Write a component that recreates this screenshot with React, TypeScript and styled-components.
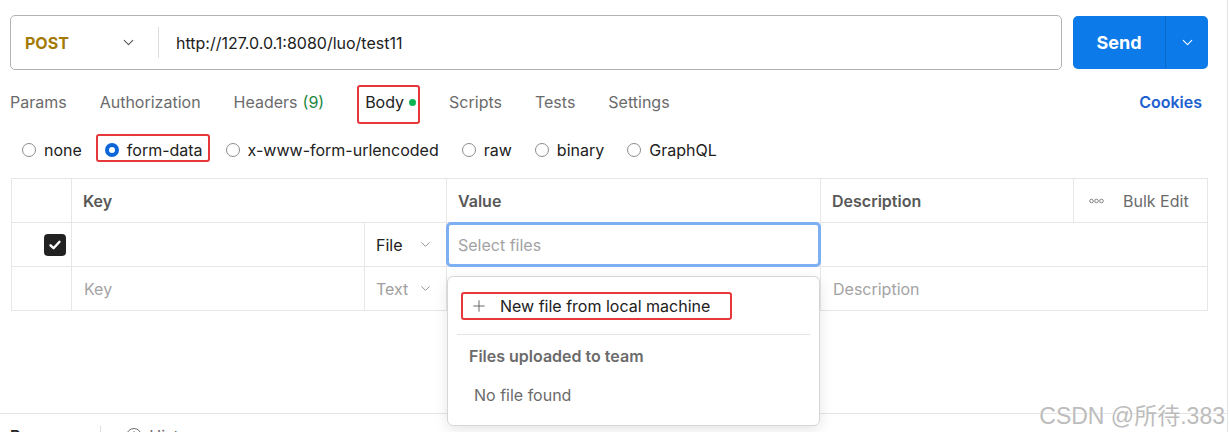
import React from 'react'
import styled, { createGlobalStyle } from 'styled-components'
import { ChevronDown, Plus, Clock } from 'lucide-react'

const GlobalStyle = createGlobalStyle`
    html, body {
        margin: 0;
        padding: 0;
        background: #fff;
    }
    body {
        font-family: Inter, "Noto Sans", "Noto Sans CJK SC", sans-serif;
        color: #212121;
        -webkit-font-smoothing: antialiased;
    }
`

const Page = styled.div`
    position: relative;
    box-sizing: border-box;
    width: 1228px;
    height: 432px;
    overflow: hidden;
    border-right: 1px solid #e4e4e4;
    display: flex;
    flex-direction: column;
    & > * {
        flex-shrink: 0;
    }
`

const RequestBar = styled.div`
    display: flex;
    align-items: center;
    gap: 11px;
    margin-top: 15px;
    padding: 0 19px 0 10px;
`

const UrlBox = styled.div`
    flex: 1;
    height: 55px;
    box-sizing: border-box;
    border: 1px solid #b3b3b3;
    border-radius: 5px;
    display: flex;
    align-items: center;
`

const MethodSelect = styled.div`
    width: 148px;
    height: 31px;
    box-sizing: border-box;
    border-right: 1px solid #dedede;
    display: flex;
    align-items: center;
    justify-content: space-between;
    padding: 0 21px 0 14px;
    color: #a47a06;
    font-weight: 700;
    font-size: 16px;
    svg {
        color: #555;
    }
`

const UrlText = styled.span`
    padding-left: 17px;
    font-size: 16px;
    color: #212121;
`

const SendGroup = styled.div`
    display: flex;
    width: 135px;
    height: 53px;
    border-radius: 5px;
    background: #0c7ae8;
    color: #fff;
    overflow: hidden;
`

const SendLabel = styled.div`
    width: 92px;
    display: flex;
    align-items: center;
    justify-content: center;
    font-weight: 700;
    font-size: 18px;
    border-right: 1px solid #0a6bcc;
`

const SendChevron = styled.div`
    flex: 1;
    display: flex;
    align-items: center;
    justify-content: center;
`

const TabsRow = styled.div`
    display: flex;
    align-items: center;
    height: 38px;
    margin-top: 13px;
    padding: 0 25px 0 10px;
`

const TabList = styled.div`
    display: flex;
    align-items: center;
    gap: 33px;
    flex: 1;
`

const Tab = styled.span<{ $active?: boolean }>`
    position: relative;
    display: inline-flex;
    align-items: center;
    height: 20px;
    font-size: 16px;
    color: ${(p) => (p.$active ? '#212121' : '#6b6b6b')};
`

const Count = styled.span`
    margin-left: 5px;
    color: #23873f;
`

const Dot = styled.span`
    width: 7px;
    height: 7px;
    border-radius: 50%;
    background: #0cb554;
    margin-left: 5px;
`

const Marked = styled.span<{ $t: number; $r: number; $b: number; $l: number }>`
    position: relative;
    display: inline-flex;
    align-items: center;
    &::after {
        content: '';
        position: absolute;
        top: ${(p) => p.$t}px;
        right: ${(p) => p.$r}px;
        bottom: ${(p) => p.$b}px;
        left: ${(p) => p.$l}px;
        border: 2px solid #e5373c;
        border-radius: 3px;
        pointer-events: none;
    }
`

const CookiesLink = styled.span`
    color: #1c61cf;
    font-weight: 600;
    font-size: 16px;
`

const RadioRow = styled.div`
    display: flex;
    align-items: center;
    gap: 23px;
    height: 32px;
    margin-top: 13px;
    padding-left: 22px;
`

const RadioItem = styled.label`
    display: inline-flex;
    align-items: center;
    gap: 8px;
    height: 20px;
    font-size: 16px;
    color: #212121;
`

const RadioCircle = styled.span<{ $checked?: boolean }>`
    box-sizing: border-box;
    width: 14px;
    height: 14px;
    border-radius: 50%;
    border: ${(p) => (p.$checked ? '4px solid #0c66d8' : '1px solid #8c8c8c')};
    background: #fff;
`

const Table = styled.div`
    display: grid;
    grid-template-columns: 59px 292px 81px 373px 252px 133px;
    grid-auto-rows: 43px;
    gap: 1px;
    padding: 1px;
    background: #e6e6e6;
    margin: 12px 0 0 11px;
    width: max-content;
`

const Cell = styled.div<{ $span?: number }>`
    background: #fff;
    display: flex;
    align-items: center;
    padding: 0 11px;
    font-size: 16px;
    grid-column: span ${(p) => p.$span || 1};
    min-width: 0;
`

const HeadCell = styled(Cell)`
    font-weight: 600;
    color: #585858;
`

const CheckCell = styled(Cell)`
    justify-content: flex-end;
    padding: 0 5px 0 0;
`

const CheckBox = styled.span`
    width: 22px;
    height: 22px;
    border-radius: 4px;
    background: #212121;
    display: flex;
    align-items: center;
    justify-content: center;
`

const BulkCell = styled(Cell)`
    padding-left: 15px;
    gap: 19px;
    color: #6b6b6b;
    font-weight: 400;
`

const TypeCell = styled(Cell)<{ $muted?: boolean }>`
    justify-content: space-between;
    padding: 0 13px 0 11px;
    color: ${(p) => (p.$muted ? '#a0a0a0' : '#212121')};
    svg {
        color: #8c8c8c;
    }
`

const Placeholder = styled.span`
    color: #a3a3a3;
`

const ValueCell = styled(Cell)`
    padding: 0;
    position: relative;
    overflow: visible;
    z-index: 1;
`

const FileInput = styled.div`
    box-sizing: border-box;
    margin: -1px;
    width: calc(100% + 2px);
    height: calc(100% + 2px);
    border: 3px solid #7cb0f2;
    border-radius: 5px;
    display: flex;
    align-items: center;
    padding-left: 9px;
    color: #a3a3a3;
    font-size: 16px;
`

const Menu = styled.div`
    position: absolute;
    top: 276px;
    left: 447px;
    width: 373px;
    height: 150px;
    box-sizing: border-box;
    background: #fff;
    border: 1px solid #d6d6d6;
    border-radius: 6px;
    box-shadow: 0 4px 14px rgba(0, 0, 0, 0.1);
    padding: 15px 9px 0 9px;
    z-index: 2;
`

const MenuItem = styled.div`
    display: flex;
    align-items: center;
    gap: 12px;
    height: 28px;
    padding-left: 13px;
    font-size: 16px;
    color: #212121;
    svg {
        color: #666;
    }
`

const MenuDivider = styled.div`
    height: 1px;
    background: #e4e4e4;
    margin: 14px 0 0 0;
`

const MenuHeading = styled.div`
    font-size: 16px;
    font-weight: 600;
    color: #6b6b6b;
    padding-left: 12px;
    margin-top: 11px;
`

const MenuEmpty = styled.div`
    font-size: 16px;
    color: #6b6b6b;
    padding-left: 17px;
    margin-top: 19px;
`

const BottomBar = styled.div`
    display: flex;
    align-items: center;
    height: 44px;
    margin-top: 102px;
    border-top: 1px solid #e4e4e4;
    padding-left: 10px;
    font-size: 16px;
`

const BottomTab = styled.span<{ $bold?: boolean }>`
    display: inline-flex;
    align-items: center;
    gap: 6px;
    font-weight: ${(p) => (p.$bold ? 600 : 400)};
    color: ${(p) => (p.$bold ? '#212121' : '#6b6b6b')};
`

const BottomDivider = styled.span`
    width: 1px;
    height: 20px;
    background: #ddd;
    margin: 0 24px 0 14px;
`

const Watermark = styled.div`
    position: absolute;
    right: 2px;
    top: 397px;
    font-family: "Liberation Sans", "Noto Sans CJK SC", sans-serif;
    font-size: 23px;
    color: #bcbcbc;
    text-shadow: 0 0 2px #fff, 0 0 2px #fff;
    z-index: 3;
`

const Dots = () => (
    <svg width="15" height="6" viewBox="0 0 15 6">
        {[2.5, 7.5, 12.5].map((cx) => (
            <circle key={cx} cx={cx} cy="3" r="1.8" fill="none" stroke="#777" strokeWidth="0.9" />
        ))}
    </svg>
)

const Check = () => (
    <svg width="14" height="14" viewBox="0 0 14 14">
        <path d="M2.5 7.3 L5.6 10.2 L11.5 3.8" fill="none" stroke="#fff" strokeWidth="2.4" strokeLinecap="round" strokeLinejoin="round" />
    </svg>
)

const radios = ['none', 'form-data', 'x-www-form-urlencoded', 'raw', 'binary', 'GraphQL']

export default function App() {
    return (
        <>
            <GlobalStyle />
            <Page>
                <RequestBar>
                    <UrlBox>
                        <MethodSelect>
                            POST
                            <ChevronDown size={17} strokeWidth={1.5} />
                        </MethodSelect>
                        <UrlText>http://127.0.0.1:8080/luo/test11</UrlText>
                    </UrlBox>
                    <SendGroup>
                        <SendLabel>Send</SendLabel>
                        <SendChevron>
                            <ChevronDown size={17} strokeWidth={1.5} />
                        </SendChevron>
                    </SendGroup>
                </RequestBar>

                <TabsRow>
                    <TabList>
                        <Tab>Params</Tab>
                        <Tab>Authorization</Tab>
                        <Tab>
                            Headers<Count>(9)</Count>
                        </Tab>
                        <Marked $t={-7} $r={-4} $b={-12} $l={-8} style={{ marginLeft: 8 }}>
                            <Tab $active>
                                Body<Dot />
                            </Tab>
                        </Marked>
                        <Tab>Scripts</Tab>
                        <Tab>Tests</Tab>
                        <Tab>Settings</Tab>
                    </TabList>
                    <CookiesLink>Cookies</CookiesLink>
                </TabsRow>

                <RadioRow>
                    {radios.map((r) =>
                        r === 'form-data' ? (
                            <Marked key={r} $t={-6} $r={-7} $b={-2} $l={-9}>
                                <RadioItem>
                                    <RadioCircle $checked />
                                    {r}
                                </RadioItem>
                            </Marked>
                        ) : (
                            <RadioItem key={r}>
                                <RadioCircle />
                                {r}
                            </RadioItem>
                        )
                    )}
                </RadioRow>

                <Table>
                    <Cell />
                    <HeadCell $span={2}>Key</HeadCell>
                    <HeadCell>Value</HeadCell>
                    <HeadCell>Description</HeadCell>
                    <BulkCell>
                        <Dots />
                        Bulk Edit
                    </BulkCell>

                    <CheckCell>
                        <CheckBox>
                            <Check />
                        </CheckBox>
                    </CheckCell>
                    <Cell />
                    <TypeCell>
                        File
                        <ChevronDown size={15} strokeWidth={1.5} />
                    </TypeCell>
                    <ValueCell>
                        <FileInput>Select files</FileInput>
                    </ValueCell>
                    <Cell $span={2} />

                    <Cell />
                    <Cell style={{ paddingLeft: 12 }}>
                        <Placeholder>Key</Placeholder>
                    </Cell>
                    <TypeCell $muted>
                        Text
                        <ChevronDown size={15} strokeWidth={1.5} />
                    </TypeCell>
                    <Cell />
                    <Cell $span={2} style={{ paddingLeft: 12 }}>
                        <Placeholder>Description</Placeholder>
                    </Cell>
                </Table>

                <Menu>
                    <Marked $t={0} $r={-22} $b={0} $l={4}>
                        <MenuItem>
                            <Plus size={18} strokeWidth={1.3} />
                            New file from local machine
                        </MenuItem>
                    </Marked>
                    <MenuDivider />
                    <MenuHeading>Files uploaded to team</MenuHeading>
                    <MenuEmpty>No file found</MenuEmpty>
                </Menu>

                <BottomBar>
                    <BottomTab $bold>Response</BottomTab>
                    <BottomDivider />
                    <BottomTab>
                        <Clock size={18} strokeWidth={1.3} />
                        History
                    </BottomTab>
                </BottomBar>

                <Watermark>CSDN @所待.383</Watermark>
            </Page>
        </>
    )
}
